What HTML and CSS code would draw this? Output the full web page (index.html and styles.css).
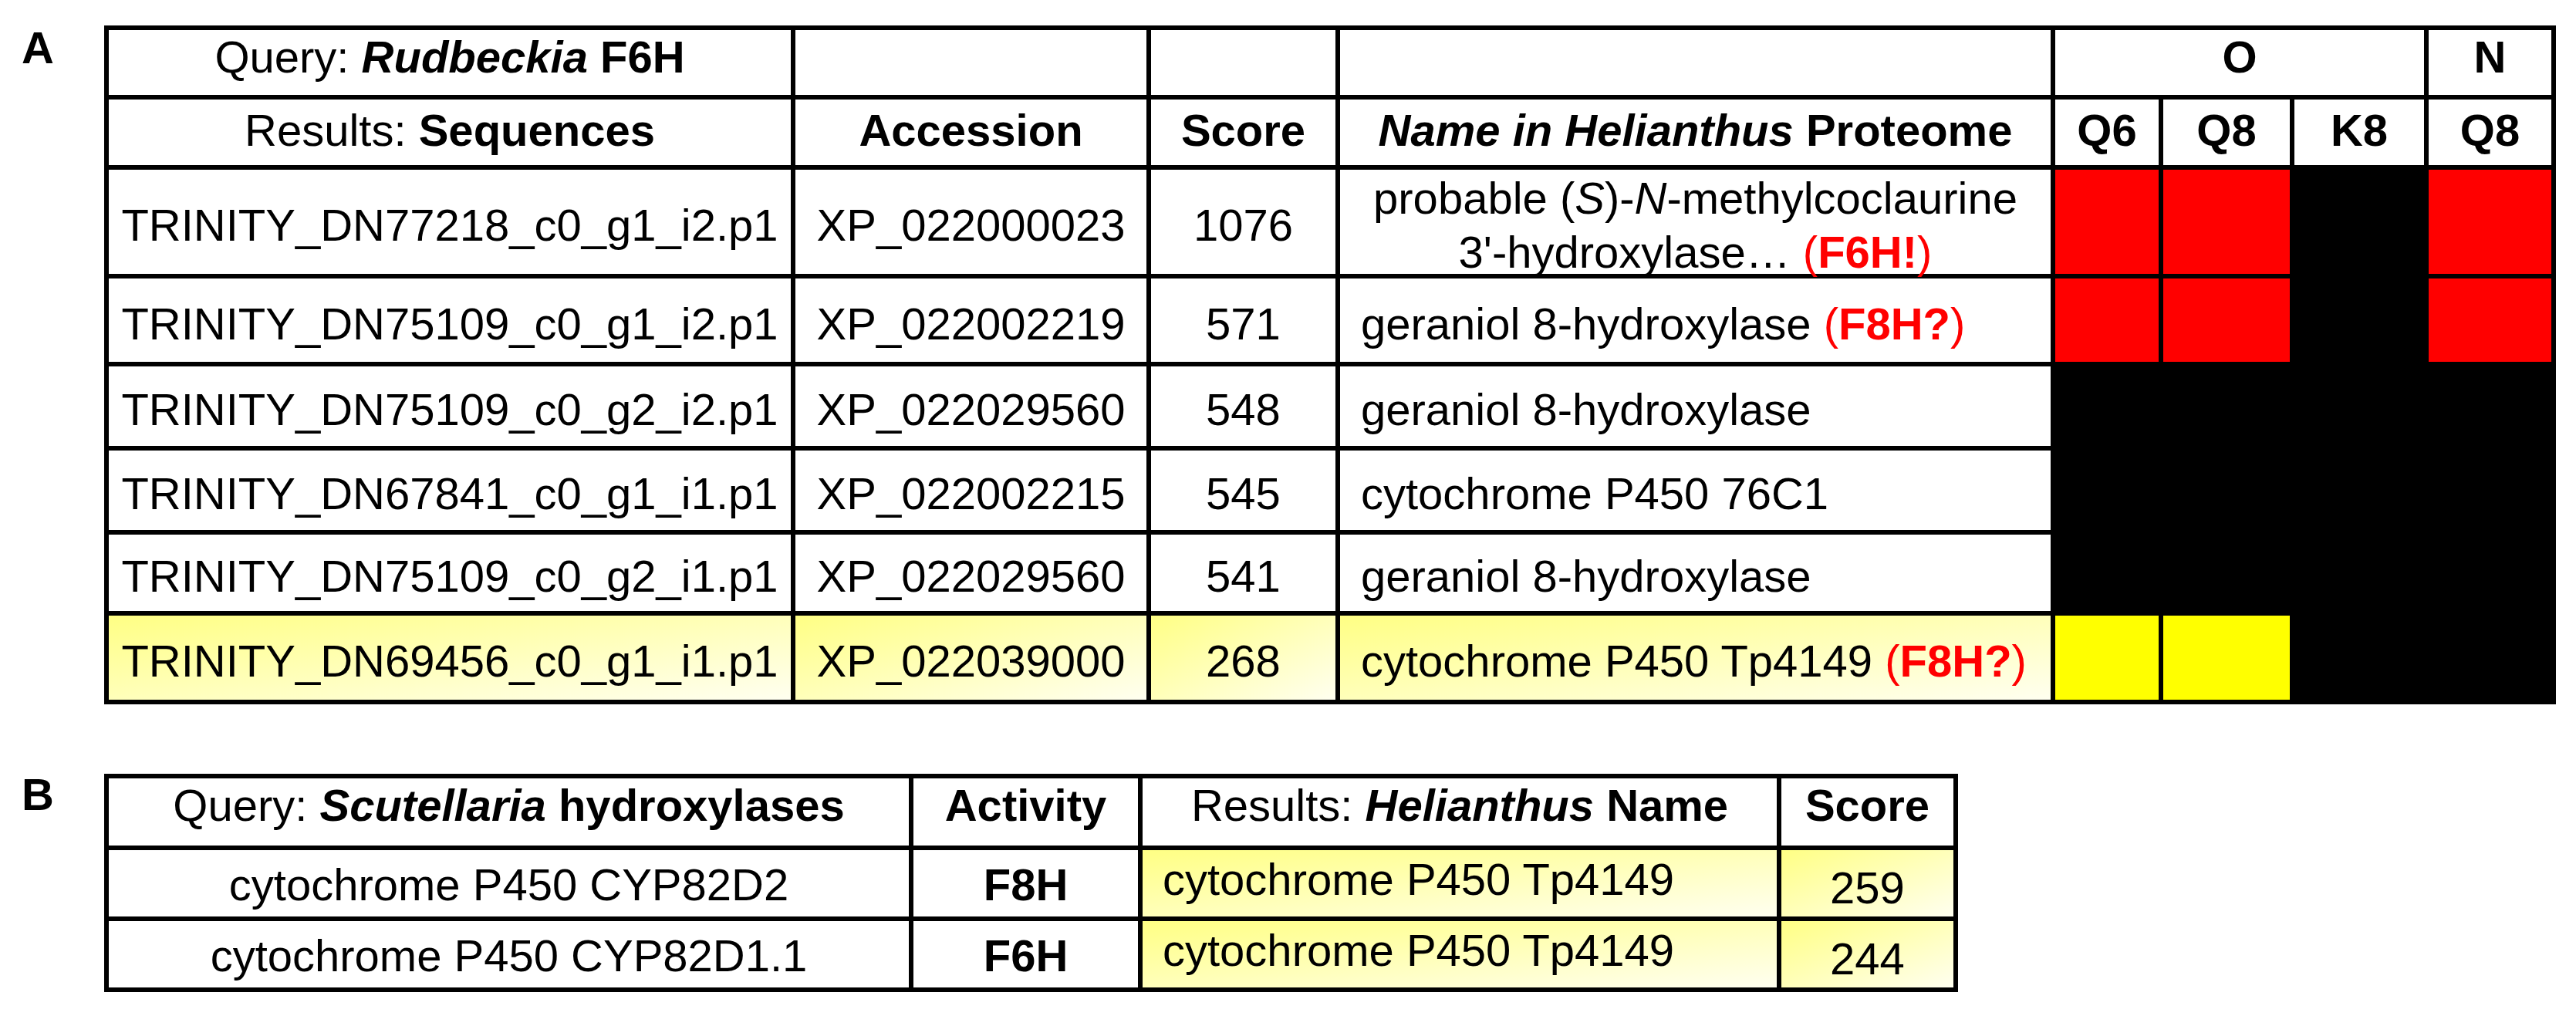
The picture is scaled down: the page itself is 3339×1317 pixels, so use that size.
FILE: index.html
```html
<!DOCTYPE html>
<html lang="en">
<head>
<meta charset="utf-8">
<title>Hydroxylase BLAST results</title>
<link rel="stylesheet" href="styles.css">
</head>
<body>
<div class="figure">
  <section class="panel">
    <div class="label">A</div>
    <div class="table table-a">
      <div class="cell head-1"><span>Query: <b><i>Rudbeckia</i> F6H</b></span></div>
      <div class="cell head-1"></div>
      <div class="cell head-1"></div>
      <div class="cell head-1"></div>
      <div class="cell head-1 span-3"><b>O</b></div>
      <div class="cell head-1"><b>N</b></div>

      <div class="cell head-2"><span>Results: <b>Sequences</b></span></div>
      <div class="cell head-2"><b>Accession</b></div>
      <div class="cell head-2"><b>Score</b></div>
      <div class="cell head-2"><span><b><i>Name in Helianthus</i> Proteome</b></span></div>
      <div class="cell head-2"><b>Q6</b></div>
      <div class="cell head-2"><b>Q8</b></div>
      <div class="cell head-2"><b>K8</b></div>
      <div class="cell head-2"><b>Q8</b></div>

      <div class="cell data"><span>TRINITY_DN77218_c0_g1_i2.p1</span></div>
      <div class="cell data"><span>XP_022000023</span></div>
      <div class="cell data"><span>1076</span></div>
      <div class="cell data"><span>probable (<i>S</i>)-<i>N</i>-methylcoclaurine<br>3'-hydroxylase… <span class="red">(<b>F6H!</b>)</span></span></div>
      <div class="mark red-cell"></div>
      <div class="mark red-cell"></div>
      <div class="mark black-cell"></div>
      <div class="mark red-cell"></div>

      <div class="cell data"><span>TRINITY_DN75109_c0_g1_i2.p1</span></div>
      <div class="cell data"><span>XP_022002219</span></div>
      <div class="cell data"><span>571</span></div>
      <div class="cell data left"><span>geraniol 8-hydroxylase <span class="red">(<b>F8H?</b>)</span></span></div>
      <div class="mark red-cell"></div>
      <div class="mark red-cell"></div>
      <div class="mark black-cell"></div>
      <div class="mark red-cell"></div>

      <div class="cell data"><span>TRINITY_DN75109_c0_g2_i2.p1</span></div>
      <div class="cell data"><span>XP_022029560</span></div>
      <div class="cell data"><span>548</span></div>
      <div class="cell data left"><span>geraniol 8-hydroxylase</span></div>
      <div class="mark black-cell"></div>
      <div class="mark black-cell"></div>
      <div class="mark black-cell"></div>
      <div class="mark black-cell"></div>

      <div class="cell data"><span>TRINITY_DN67841_c0_g1_i1.p1</span></div>
      <div class="cell data"><span>XP_022002215</span></div>
      <div class="cell data"><span>545</span></div>
      <div class="cell data left"><span>cytochrome P450 76C1</span></div>
      <div class="mark black-cell"></div>
      <div class="mark black-cell"></div>
      <div class="mark black-cell"></div>
      <div class="mark black-cell"></div>

      <div class="cell data"><span>TRINITY_DN75109_c0_g2_i1.p1</span></div>
      <div class="cell data"><span>XP_022029560</span></div>
      <div class="cell data"><span>541</span></div>
      <div class="cell data left"><span>geraniol 8-hydroxylase</span></div>
      <div class="mark black-cell"></div>
      <div class="mark black-cell"></div>
      <div class="mark black-cell"></div>
      <div class="mark black-cell"></div>

      <div class="cell data yellow"><span>TRINITY_DN69456_c0_g1_i1.p1</span></div>
      <div class="cell data yellow"><span>XP_022039000</span></div>
      <div class="cell data yellow"><span>268</span></div>
      <div class="cell data left yellow"><span>cytochrome P450 Tp4149 <span class="red">(<b>F8H?</b>)</span></span></div>
      <div class="mark yellow-cell"></div>
      <div class="mark yellow-cell"></div>
      <div class="mark black-cell"></div>
      <div class="mark black-cell"></div>
    </div>
  </section>

  <section class="panel panel-b">
    <div class="label label-b">B</div>
    <div class="table table-b">
      <div class="cell head-b"><span>Query: <b><i>Scutellaria</i> hydroxylases</b></span></div>
      <div class="cell head-b"><b>Activity</b></div>
      <div class="cell head-b"><span>Results: <b><i>Helianthus</i> Name</b></span></div>
      <div class="cell head-b"><b>Score</b></div>

      <div class="cell data-b"><span>cytochrome P450 CYP82D2</span></div>
      <div class="cell data-b"><b>F8H</b></div>
      <div class="cell data-b left raised yellow"><span>cytochrome P450 Tp4149</span></div>
      <div class="cell data-b lowered yellow"><span>259</span></div>

      <div class="cell data-b"><span>cytochrome P450 CYP82D1.1</span></div>
      <div class="cell data-b"><b>F6H</b></div>
      <div class="cell data-b left raised yellow"><span>cytochrome P450 Tp4149</span></div>
      <div class="cell data-b lowered yellow"><span>244</span></div>
    </div>
  </section>
</div>
</body>
</html>
```

FILE: styles.css
```css
html, body {
  margin: 0;
  padding: 0;
  background: #ffffff;
}

body {
  font-family: "Liberation Sans", Arial, Helvetica, sans-serif;
  color: #000000;
}

.figure {
  width: 3339px;
  padding-top: 33px;
}

.panel {
  display: flex;
  align-items: flex-start;
}

.panel-b {
  margin-top: 90px;
}

.label {
  box-sizing: border-box;
  width: 135px;
  padding-left: 28px;
  font-size: 58px;
  font-weight: bold;
  line-height: 58px;
}

.label-b {
  margin-top: -2px;
}

.table {
  display: grid;
  gap: 6px;
  padding: 6px;
  background: #000000;
  font-size: 58px;
  line-height: 70px;
}

.table-a {
  grid-template-columns: 884px 455px 239px 921px 134px 164px 168px 159px;
  grid-template-rows: 84px 85px 135px 108px 103px 103px 99px 109px;
}

.table-b {
  grid-template-columns: 1037px 291px 822px 223px;
  grid-template-rows: 87px 86px 86px;
}

.cell {
  box-sizing: border-box;
  background: #ffffff;
  display: flex;
  align-items: center;
  justify-content: center;
  text-align: center;
  white-space: nowrap;
}

.span-3 {
  grid-column: span 3;
}

.head-1 {
  padding-bottom: 15px;
}

.head-2 {
  padding-bottom: 6px;
}

.head-b {
  padding-bottom: 18px;
}

.data {
  padding-top: 9px;
}

.data-b {
  padding-top: 3px;
}

.left {
  justify-content: flex-start;
  text-align: left;
  padding-left: 27px;
}

.data-b.left {
  padding-left: 26px;
}

.raised {
  padding-top: 0;
  padding-bottom: 10px;
}

.lowered {
  padding-top: 12px;
}

.red {
  color: #ff0000;
}

.yellow {
  background: linear-gradient(to bottom right, #ffff84, #fffff0);
}

.mark {
  background: #ffffff;
}

.red-cell {
  background: #ff0000;
}

.black-cell {
  background: #000000;
}

.yellow-cell {
  background: #ffff00;
}
```
